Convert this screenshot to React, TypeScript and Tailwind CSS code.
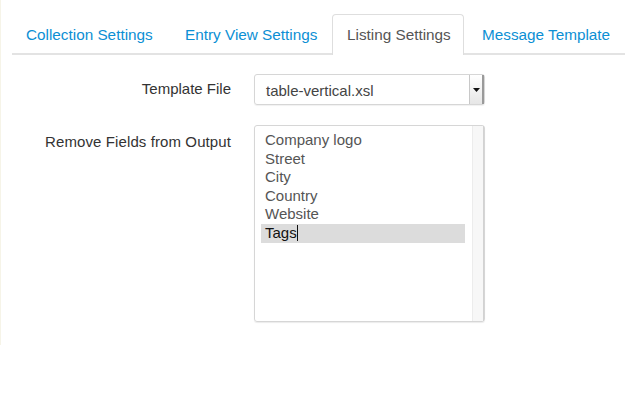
const tabs = [
  { label: "Collection Settings", cls: "w-[158px] pl-[14px]" },
  { label: "Entry View Settings", cls: "w-[162px] pl-[15px]" },
  { label: "Listing Settings", cls: "w-[132px] pl-[14px]" },
  { label: "Message Template", cls: "pl-[18px]" },
];
const fields = ["Company logo", "Street", "City", "Country", "Website"];

export default function App() {
  return (
    <div className="w-[636px] h-[394px] bg-white font-['Liberation_Sans',Arial,sans-serif] text-[15px] overflow-hidden">
      <div className="h-[345px] border-l border-[#f6f4e8] pt-[14px]">
        {/* Tabs */}
        <div className="mx-[11px] flex border-b-2 border-[#e3e3e3] text-[15.3px] whitespace-nowrap">
          {tabs.map((t) => {
            const active = t.label === "Listing Settings";
            return (
              <div
                key={t.label}
                className={
                  (active
                    ? "-mb-[2px] h-[41px] pt-[9px] border border-b-0 border-[#dedede] rounded-t-[4px] bg-white text-[#555] "
                    : "h-[39px] pt-[10px] text-[#0c8fd4] ") +
                  "shrink-0 " +
                  t.cls
                }
              >
                {t.label}
              </div>
            );
          })}
        </div>

        {/* Form */}
        <div className="mt-[19px] flex flex-col gap-[20px]">
          <div className="flex items-center">
            <label className="w-[230px] text-right text-[#333]">Template File</label>
            <div className="ml-[23px] w-[231px] h-[31px] flex border border-[#d6d6d6] rounded-[3px] shadow-[0_1px_1px_rgba(0,0,0,0.06)]">
              <div className="flex-1 pl-[11px] pt-[5px] text-[#444]">table-vertical.xsl</div>
              <div className="w-[15px] flex items-center justify-center border-l border-[#c8c8c8] bg-gradient-to-b from-white to-[#e6e6e6] border-r-2 border-r-[#9a9a9a]">
                <svg width="7" height="4" viewBox="0 0 7 4">
                  <path d="M0 0h7L3.5 4z" fill="#111" />
                </svg>
              </div>
            </div>
          </div>

          <div className="flex items-start">
            <label className="w-[230px] text-right text-[#333] pt-[6px] tracking-[0.1px]">Remove Fields from Output</label>
            <div className="ml-[23px] w-[231px] h-[197px] flex border border-[#d6d6d6] rounded-[3px] shadow-[0_1px_1px_rgba(0,0,0,0.08)]">
              <div className="flex-1 pl-[6px] pt-[5px] leading-[18.6px]">
                {fields.map((f) => (
                  <div key={f} className="pl-[4px] text-[#555]">{f}</div>
                ))}
                <div className="pl-[4px] bg-[#dcdcdc] text-[#111] w-[204px] h-[19px]">
                  Tags<span className="inline-block w-[1px] h-[16px] bg-[#111] align-[-3px]" />
                </div>
              </div>
              <div className="w-[12px] bg-[#f7f7f7] border-l border-[#ececec] border-r border-r-[#d2d2d2]" />
            </div>
          </div>
        </div>
      </div>
    </div>
  );
}
